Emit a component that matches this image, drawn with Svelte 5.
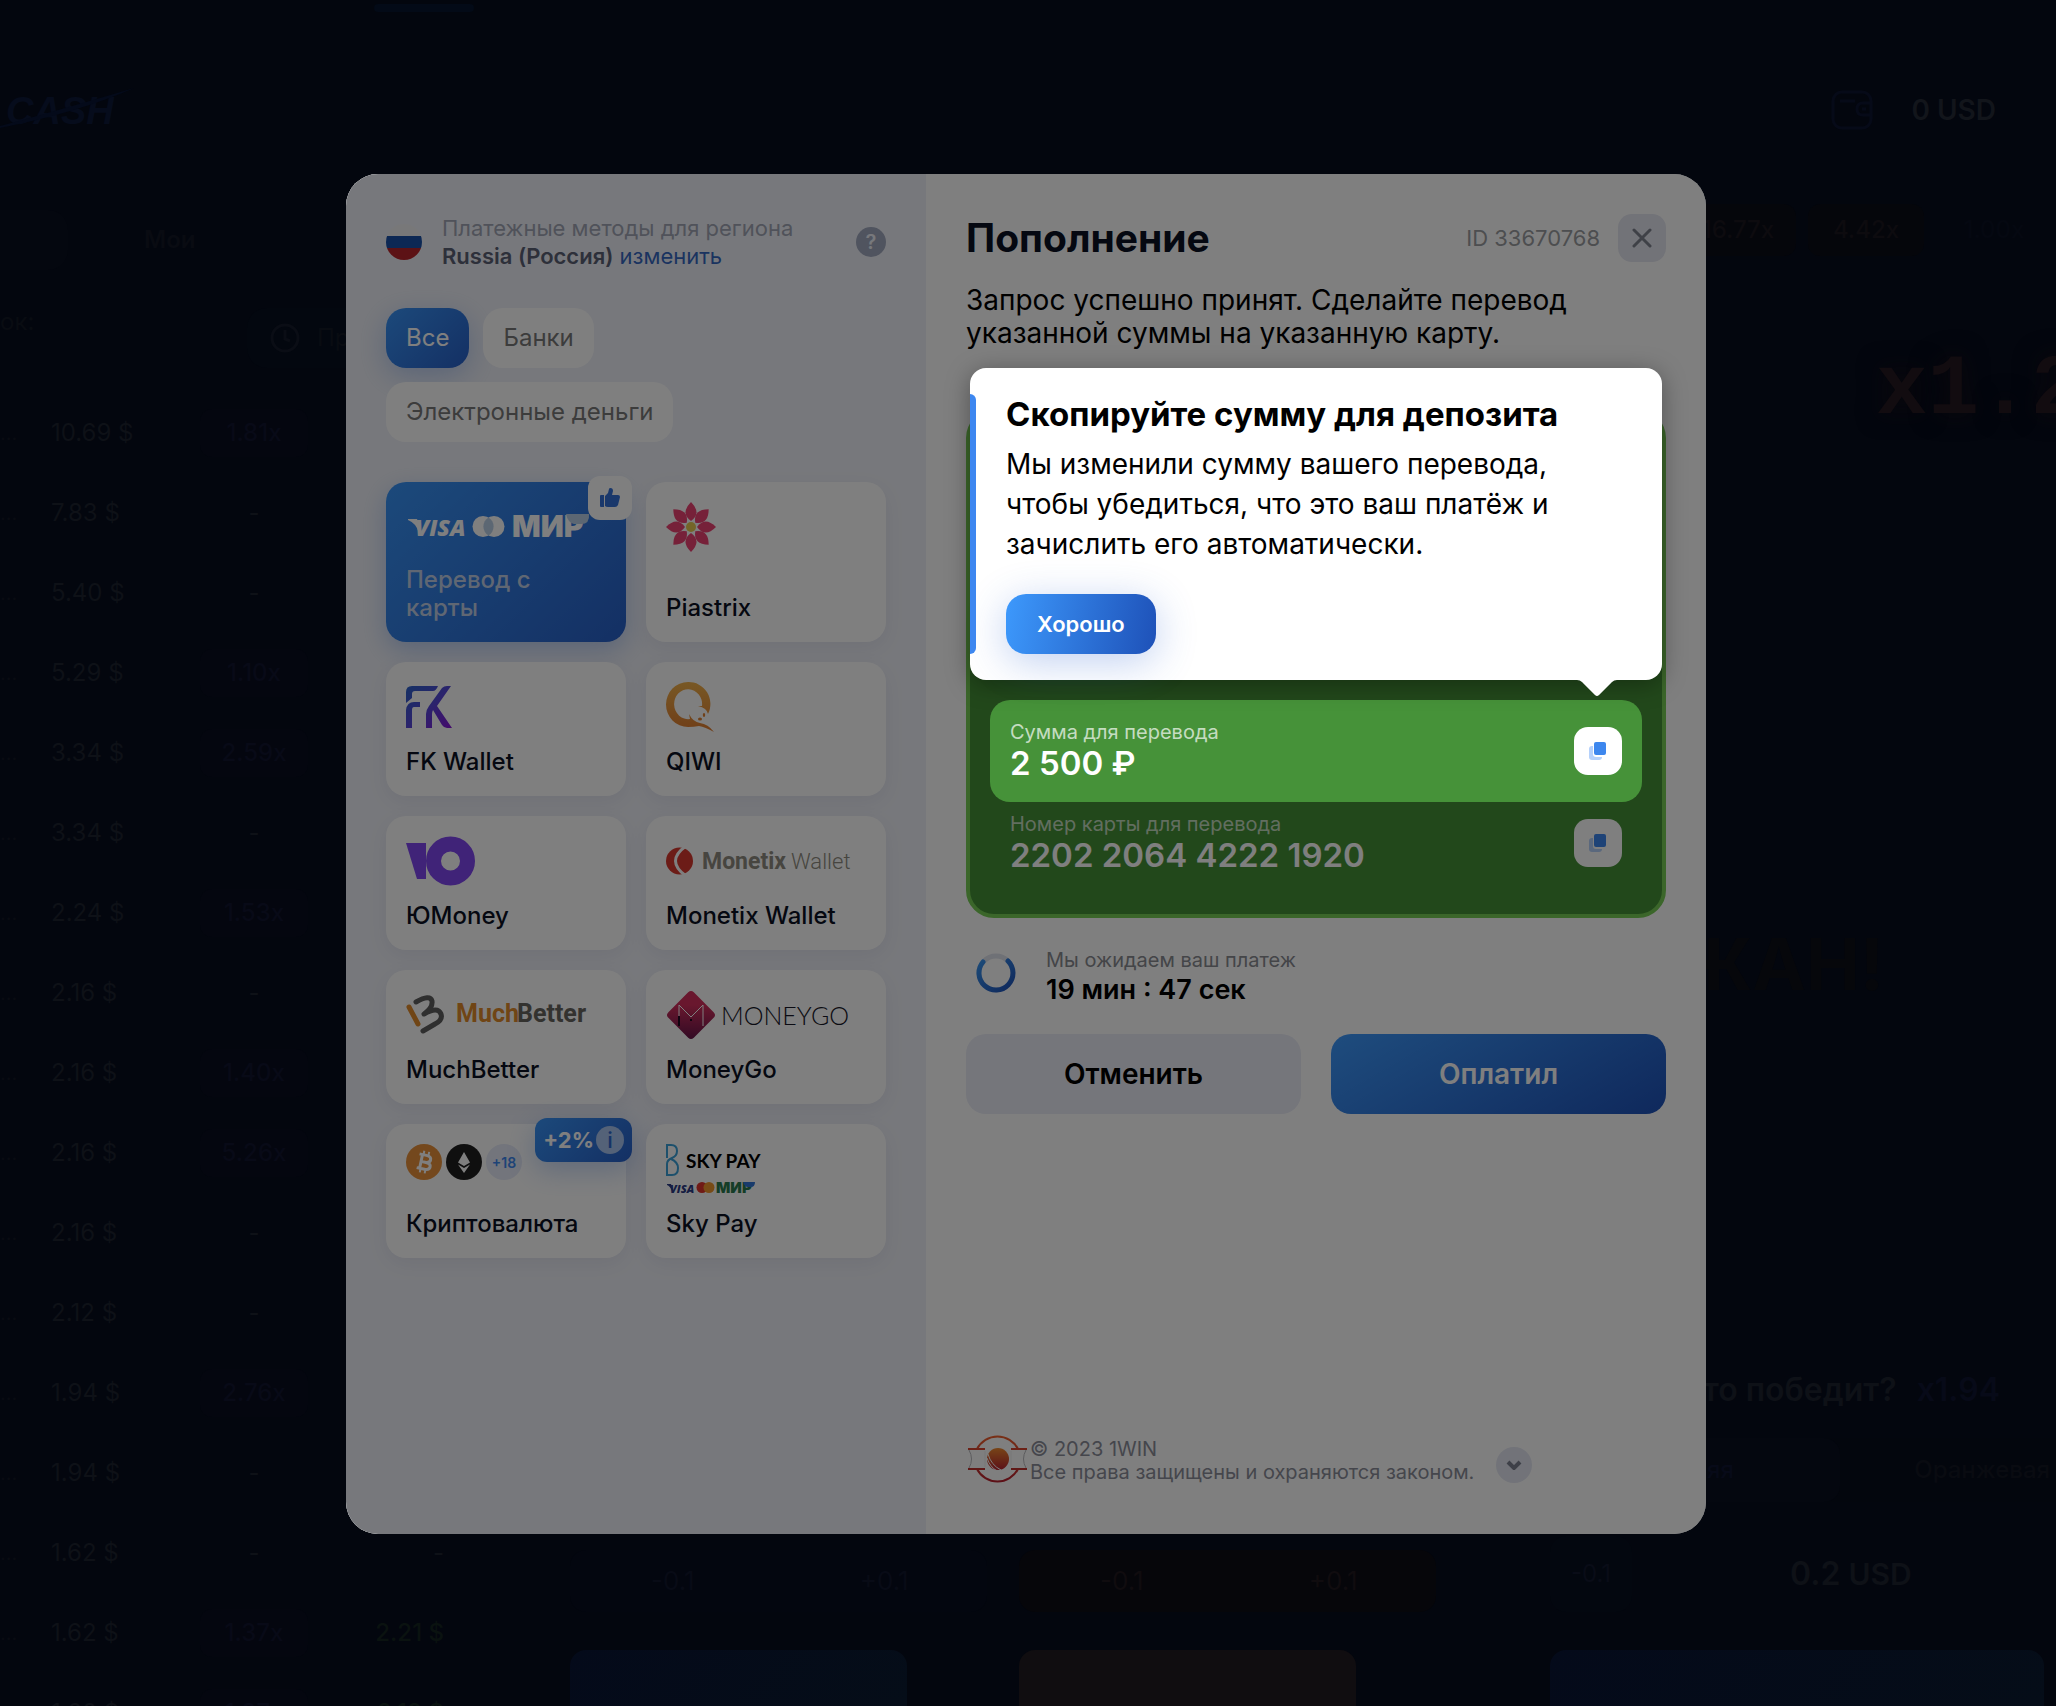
<script lang="ts">
  const bets = [
    { amount: '10.69 $', ratio: '1.81x' },
    { amount: '7.83 $' },
    { amount: '5.40 $' },
    { amount: '5.29 $', ratio: '1.10x' },
    { amount: '3.34 $', ratio: '2.59x' },
    { amount: '3.34 $' },
    { amount: '2.24 $', ratio: '1.53x' },
    { amount: '2.16 $' },
    { amount: '2.16 $', ratio: '1.40x' },
    { amount: '2.16 $', ratio: '5.26x' },
    { amount: '2.16 $' },
    { amount: '2.12 $' },
    { amount: '1.94 $', ratio: '2.76x' },
    { amount: '1.94 $' },
    { amount: '1.62 $', win: '-' },
    { amount: '1.62 $', ratio: '1.37x', win: '2.21 $' },
    { amount: '1.60 $', ratio: '1.37x', win: '2.19 $' },
  ]

  const filters = ['Все', 'Банки', 'Электронные деньги']
  let filter = $state('Все')

  const methods = [
    { id: 'card', label: 'Перевод с карты' },
    { id: 'piastrix', label: 'Piastrix' },
    { id: 'fk', label: 'FK Wallet' },
    { id: 'qiwi', label: 'QIWI' },
    { id: 'yoomoney', label: 'ЮMoney' },
    { id: 'monetix', label: 'Monetix Wallet' },
    { id: 'muchbetter', label: 'MuchBetter' },
    { id: 'moneygo', label: 'MoneyGo' },
    { id: 'crypto', label: 'Криптовалюта' },
    { id: 'skypay', label: 'Sky Pay' },
  ]
  let method = $state('card')
  let showHint = $state(true)

  const petals = [0, 45, 90, 135, 180, 225, 270, 315]
</script>

{#snippet copyIcon()}
  <svg width="18" height="18" viewBox="0 0 18 18" aria-hidden="true">
    <rect x="0" y="4" width="13" height="14" rx="3" fill="#b5d1fb" />
    <rect x="4" y="-1" width="15" height="16" rx="3" fill="#fff" />
    <rect x="5" y="0" width="12" height="13" rx="2" fill="#3d87ee" />
  </svg>
{/snippet}

{#snippet logo(id: string)}
  {#if id === 'card'}
    <svg width="184" height="50" viewBox="0 0 184 50">
      <path d="M2 17h9l5 13-3 1Q10 21 2 18z" fill="#fff" />
      <text class="visa" x="9" y="34" font-size="23" fill="#fff">VISA</text>
      <circle cx="77" cy="24.500" r="10.500" fill="#fff" />
      <circle cx="88" cy="24.500" r="10.500" fill="#fff" />
      <path d="M82.500 15.500a10.500 10.500 0 0 1 0 18a10.500 10.500 0 0 1 0-18z" fill="#b9cfe6" />
      <text class="mir" x="106" y="35" font-size="30" fill="#fff">МИР</text>
      <path d="M160 12h23q1 10-8 10h-7q-6-1-8-10z" fill="#b9cfe6" />
    </svg>
  {:else if id === 'piastrix'}
    <svg width="50" height="50" viewBox="0 0 50 50">
      {#each petals as angle}
        <path d="M25 19q-11-8 0-19q11 11 0 19z" fill="#ec4273" transform="rotate({angle} 25 25)" />
      {/each}
      <circle cx="25" cy="25" r="5" fill="#e8cb4e" />
    </svg>
  {:else if id === 'fk'}
    <svg width="46" height="50" viewBox="0 -4 46 50">
      <defs>
        <linearGradient id="fk" x1="0" y1="0" x2="1" y2="1">
          <stop offset="0" stop-color="#2a62c8" />
          <stop offset=".5" stop-color="#5547d8" />
          <stop offset="1" stop-color="#8a14d8" />
        </linearGradient>
      </defs>
      <path
        fill="url(#fk)"
        d="M0 17V6Q0 0 6 0H32Q30 5 27 5H9Q6 5 6 8V12ZM0 42V24Q1 16 8 16H14V21H8Q6 21 6 24V42ZM20 42V28Q20 24 23 20L36 2Q38 0 41 0H45L31 20L46 42H41Q38 42 36 39L27 24Q26 26 26 28V42Z"
      />
    </svg>
  {:else if id === 'qiwi'}
    <svg width="50" height="50" viewBox="0 0 50 50">
      <defs>
        <linearGradient id="qiwi" x1="0" y1="0" x2="0" y2="1">
          <stop offset="0" stop-color="#f0b04a" />
          <stop offset="1" stop-color="#e07c30" />
        </linearGradient>
      </defs>
      <path
        fill="url(#qiwi)"
        d="M22 0A22 22 0 0 1 42 32Q41 26 32 24H36A14 15 0 1 0 24 37L23 32Q27 40 34 41Q42 42 48 50Q39 45 33 44Q28 45 22 45A22 22.500 0 0 1 22 0Z"
      />
      <ellipse cx="34" cy="37" rx="2" ry="1.500" fill="#e08030" />
      <ellipse cx="38" cy="33" rx="1.200" ry="2" fill="#e08030" />
    </svg>
  {:else if id === 'yoomoney'}
    <svg width="70" height="50" viewBox="0 0 70 50">
      <path d="M0 7H20V43H11Z" fill="#8046f0" />
      <circle cx="44.500" cy="25" r="17" fill="none" stroke="#8046f0" stroke-width="15" />
    </svg>
  {:else if id === 'monetix'}
    <svg width="190" height="50" viewBox="0 0 190 50">
      <circle cx="13.500" cy="25" r="13.500" fill="#d8392f" />
      <path d="M20 10Q-1 25 20 40" fill="none" stroke="#fff" stroke-width="3" />
      <text x="36" y="33" font-family="Roboto" font-weight="700" font-size="23" fill="#8e8b80">Monetix</text>
      <text x="125" y="33" font-family="Roboto" font-weight="300" font-size="22" fill="#8e8b80">Wallet</text>
    </svg>
  {:else if id === 'muchbetter'}
    <svg width="190" height="50" viewBox="0 0 190 50">
      <g fill="none" stroke-width="5" stroke-linecap="round" stroke-linejoin="round">
        <path d="M3 17L12 34" stroke="#e08a2a" />
        <path d="M10 12Q24 4 26 11Q27 18 18 24Q32 16 35 24Q37 30 29 34L17 41" stroke="#5e5e5e" />
      </g>
      <text x="50" y="32" font-family="Roboto" font-weight="700" font-size="25" fill="#e08a2a">Much</text>
      <text x="111" y="32" font-family="Roboto" font-weight="700" font-size="25" fill="#66645f">Better</text>
    </svg>
  {:else if id === 'moneygo'}
    <svg width="190" height="50" viewBox="0 0 190 50">
      <defs>
        <linearGradient id="moneygo" x1="0" y1="0" x2="1" y2="1">
          <stop offset=".3" stop-color="#d22f5c" />
          <stop offset="1" stop-color="#611448" />
        </linearGradient>
      </defs>
      <rect x="7" y="7" width="36" height="36" rx="4" fill="url(#moneygo)" transform="rotate(45 25 25)" />
      <path d="M13 26V15L25 27L37 15V36" fill="none" stroke="#fff" stroke-width="1" />
      <path d="M13 26V36M24 30h2" fill="none" stroke="#200820" stroke-width="2" />
      <text x="55" y="35" font-family="Lato" font-weight="300" font-size="25" fill="#161627">MONEYGO</text>
    </svg>
  {:else if id === 'crypto'}
    <svg width="116" height="50" viewBox="0 0 116 50">
      <circle cx="18" cy="18" r="18" fill="#e8913a" />
      <g fill="none" stroke="#fff" stroke-width="3" transform="rotate(12 18 18)">
        <path d="M12 11H19Q24 11 24 14.500Q24 18 19 18H15H20Q25 18 25 21.500Q25 25 20 25H12M15 11V25" />
        <path d="M16 7V11M21 7V11M16 25V29M21 25V29" stroke-width="2" />
      </g>
      <circle cx="58" cy="18" r="18" fill="#1f1f1f" />
      <path d="M58 8L64 18.500L58 22L52 18.500ZM52 20.500L58 24L64 20.500L58 29Z" fill="#fff" />
      <circle cx="98" cy="18" r="18" fill="#e6eaf8" />
      <text x="98" y="24" text-anchor="middle" font-weight="600" font-size="14" fill="#3d87ee">+18</text>
    </svg>
  {:else if id === 'skypay'}
    <svg width="110" height="50" viewBox="0 0 110 50">
      <path d="M1 14V1H5Q11 1 11 7Q11 12 6 14Q1 16 1 20V31H6Q12 31 12 24Q12 18 5 15" fill="none" stroke="#3aa0d8" stroke-width="2" />
      <text x="20" y="24" font-family="Lato" font-weight="700" font-size="19" fill="#000">SKY PAY</text>
      <path d="M1 40h4l2 6-1 1Q4 42 1 41z" fill="#2b3a85" />
      <text class="visa" x="4" y="49" font-size="11" fill="#2b3a85">VISA</text>
      <circle cx="36" cy="43.500" r="5.500" fill="#e0352c" />
      <circle cx="43" cy="43.500" r="5.500" fill="#f0972c" />
      <text class="mir" x="50" y="49" font-size="15" fill="#2a7a4e">МИР</text>
      <path d="M77 38h12q0 5-4 5h-4q-3-1-4-5z" fill="#3277d8" />
    </svg>
  {/if}
{/snippet}

<div class="page">
  <div class="game">
    <section class="bets">
      <div class="brand">
        <div class="indicator"></div>
        <svg width="140" height="80" viewBox="0 0 140 80" aria-label="Cash">
          <text x="6" y="56" font-family="Liberation Sans" font-weight="700" font-style="italic" font-size="38" fill="#060c1c">CASH</text>
          <path d="M0 58Q60 42 134 20Q80 44 0 60Z" fill="#040a1a" />
        </svg>
      </div>
      <div class="tabs"><span class="tab current"></span><span class="tab">Мои</span></div>
      <div class="summary">
        <span>ок:</span>
        <span class="history">
          <svg width="32" height="32" viewBox="0 0 32 32" fill="none" stroke="#0a0d15" stroke-width="3">
            <circle cx="16" cy="16" r="13" /><path d="M16 8V17L21 19" />
          </svg>
          Пр
        </span>
      </div>
      <table>
        <tbody>
          {#each bets as bet}
            <tr>
              <td class="user">…</td>
              <td class="stake">{bet.amount}</td>
              <td class="ratio">{#if bet.ratio}<span>{bet.ratio}</span>{:else}-{/if}</td>
              <td class="win" class:won={bet.ratio}>{bet.win ?? ''}</td>
            </tr>
          {/each}
        </tbody>
      </table>
    </section>

    <section class="controls">
      {#each ['blue', 'orange'] as tone}
        <div class="control {tone}">
          <div class="steps"><span>-0.1</span><span>+0.1</span></div>
          <div class="place"></div>
        </div>
      {/each}
    </section>

    <section class="side">
      <div class="balance">
        <svg width="42" height="40" viewBox="0 0 42 40" fill="none" stroke="#060a18" stroke-width="3">
          <rect x="2" y="2" width="38" height="36" rx="9" /><path d="M9 11H24M40 13H32Q26 13 26 19Q26 25 32 25H40M31 19H35" />
        </svg>
        <span>0 USD</span>
      </div>
      <div class="rates"><span>16.77x</span><span>4.42x</span><span class="cold">1.00x</span></div>
      <div class="rocket">x1.2</div>
      <div class="cashed">ЖАН!</div>
      <div class="question">то победит? <span>x1.94</span></div>
      <div class="teams"><span class="picked">яя</span><span>Оранжевая</span></div>
      <div class="stake-box"><span class="step">-0.1</span><span class="sum">0.2 <small>USD</small></span></div>
      <div class="place"></div>
    </section>
  </div>

  <div class="overlay">
    <div class="modal" role="dialog" aria-label="Пополнение">
      <aside>
        <div class="region">
          <svg width="36" height="36" viewBox="0 0 36 36" aria-hidden="true">
            <clipPath id="flag"><circle cx="18" cy="18" r="18" /></clipPath>
            <g clip-path="url(#flag)">
              <rect width="36" height="12" fill="#f1f1f3" />
              <rect y="12" width="36" height="12" fill="#1a50a8" />
              <rect y="24" width="36" height="12" fill="#b8242a" />
            </g>
          </svg>
          <p>
            Платежные методы для региона<br />
            <b>Russia (Россия)</b> <a href="#region">изменить</a>
          </p>
          <button class="help" aria-label="Помощь">?</button>
        </div>

        <div class="filters">
          {#each filters as name}
            <button class:active={filter === name} onclick={() => (filter = name)}>{name}</button>
          {/each}
        </div>

        <div class="methods">
          {#each methods as item}
            <button class="method" class:active={method === item.id} onclick={() => (method = item.id)}>
              {@render logo(item.id)}
              <span class="label">{item.label}</span>
              {#if item.id === 'card'}
                <span class="badge like">
                  <svg width="20" height="20" viewBox="0 0 20 20" fill="#3571d6" aria-hidden="true">
                    <path d="M0 8Q0 7 1 7H4V19H1Q0 19 0 18ZM5 8L8 5L9 1Q9 0 10.500 0Q13 0 13 3L12 7H18Q20 7 20 9L18 17Q17 19 15 19H8Q6 19 5 18Z" />
                  </svg>
                </span>
              {:else if item.id === 'crypto'}
                <span class="badge bonus">+2% <i>i</i></span>
              {/if}
            </button>
          {/each}
        </div>
      </aside>

      <main>
        <header>
          <h1>Пополнение</h1>
          <span class="id">ID 33670768</span>
          <button class="close" aria-label="Закрыть">
            <svg width="20" height="20" viewBox="0 0 20 20" stroke="#7e828e" stroke-width="3" stroke-linecap="round">
              <path d="M2 2L18 18M18 2L2 18" />
            </svg>
          </button>
        </header>
        <p class="intro">Запрос успешно принят. Сделайте перевод указанной суммы на указанную карту.</p>

        <div class="transfer">
          <div class="row active">
            <div>
              <span class="caption">Сумма для перевода</span>
              <strong>2 500 ₽</strong>
            </div>
            <button class="copy" aria-label="Скопировать сумму">{@render copyIcon()}</button>

            {#if showHint}
              <div class="hint" role="tooltip">
                <h2>Скопируйте сумму для депозита</h2>
                <p>Мы изменили сумму вашего перевода, чтобы убедиться, что это ваш платёж и зачислить его автоматически.</p>
                <button onclick={() => (showHint = false)}>Хорошо</button>
                <svg class="arrow" width="40" height="16" viewBox="0 0 40 16" aria-hidden="true">
                  <path d="M0 0H40Q37 0 35 2L22 15Q20 17 18 15L5 2Q3 0 0 0Z" fill="#fff" />
                </svg>
              </div>
            {/if}
          </div>
          <div class="row">
            <div>
              <span class="caption">Номер карты для перевода</span>
              <strong>2202 2064 4222 1920</strong>
            </div>
            <button class="copy" aria-label="Скопировать номер карты">{@render copyIcon()}</button>
          </div>
        </div>

        <div class="timer">
          <svg width="40" height="40" viewBox="0 0 40 40" fill="none" stroke-width="5" stroke-linecap="round" aria-hidden="true">
            <defs>
              <linearGradient id="spin" x1="0" y1="0" x2="1" y2="1">
                <stop offset="0" stop-color="#3894f0" />
                <stop offset="1" stop-color="#1e51b8" />
              </linearGradient>
            </defs>
            <circle cx="20" cy="20" r="17" stroke="#dfe2ec" />
            <path d="M7 9A17 17 0 1 0 32 8" stroke="url(#spin)" />
          </svg>
          <div>
            <span>Мы ожидаем ваш платеж</span>
            <strong>19 мин : 47 сек</strong>
          </div>
        </div>

        <div class="actions">
          <button>Отменить</button>
          <button class="primary">Оплатил</button>
        </div>

        <footer>
          <svg width="62" height="48" viewBox="0 0 62 48" fill="none" aria-hidden="true">
            <defs>
              <linearGradient id="seal" x1="0" y1="0" x2="0" y2="1">
                <stop offset="0" stop-color="#f0602e" />
                <stop offset="1" stop-color="#b8202e" />
              </linearGradient>
              <linearGradient id="ball" x1="0" y1="0" x2="0" y2="1">
                <stop offset="0" stop-color="#f08a2e" />
                <stop offset="1" stop-color="#b8202e" />
              </linearGradient>
            </defs>
            <path d="M11 14A23 23 0 0 1 52 14M11 34A23 23 0 0 0 52 34" stroke="url(#seal)" stroke-width="2" />
            <path d="M2 14H19M45 14H61" stroke="#d8442e" stroke-width="2" />
            <path d="M2 34H19M45 34H61" stroke="#c0322e" stroke-width="2" />
            <path d="M3 15Q8 24 3 33M60 15Q55 24 60 33" stroke="#b9b9bd" stroke-width="1" />
            <path d="M19 16V32M45 16V32" stroke="#efefef" stroke-width="1" />
            <circle cx="32" cy="24" r="11" fill="url(#ball)" />
            <path d="M22 19Q25 30 35 35M21 23Q24 32 31 36" stroke="#fff" stroke-width="1" />
          </svg>
          <p>© 2023 1WIN<br />Все права защищены и охраняются законом.</p>
          <button aria-label="Подробнее">
            <svg width="16" height="10" viewBox="0 0 16 10" fill="none" stroke="#7d8190" stroke-width="4">
              <path d="M2 2L8 8L14 2" />
            </svg>
          </button>
        </footer>
      </main>
      <div class="dim"></div>
    </div>
  </div>
</div>

<style>
  :global(body) {
    margin: 0;
    background: #03060e;
  }

  .page {
    --blue: linear-gradient(135deg, #3893f6, #2860c8);
    position: relative;
    min-height: 100vh;
    font-family: Inter, 'Noto Sans', sans-serif;
    font-size: 24px;
    line-height: 28px;
  }

  button {
    padding: 0;
    border: 0;
    color: inherit;
    font: inherit;
    cursor: pointer;
  }

  h1,
  h2,
  p {
    margin: 0;
  }

  /* game screen behind the dialog */
  .game {
    position: absolute;
    inset: 0;
    display: grid;
    grid-template-columns: 474px 1fr 506px;
    overflow: hidden;
    color: #0e1117;
  }

  .bets {
    display: flex;
    flex-direction: column;
    overflow: hidden;
    white-space: nowrap;
  }

  .bets > div {
    flex: none;
  }

  .brand {
    box-sizing: border-box;
    height: 210px;
    padding-top: 4px;
  }

  .indicator {
    height: 8px;
    margin: 0 0 56px 374px;
    border-radius: 4px;
    background: #030a17;
  }

  .tabs {
    display: flex;
    gap: 76px;
    height: 60px;
    line-height: 60px;
    font-weight: 600;
    color: #090b12;
  }

  .tab.current {
    width: 68px;
    border-radius: 0 20px 20px 0;
    background: #04070f;
  }

  .summary {
    display: flex;
    justify-content: space-between;
    padding: 38px 0 25px;
    color: #090c12;
  }

  .history {
    display: flex;
    align-items: center;
    gap: 16px;
    height: 60px;
    width: 205px;
    padding-left: 22px;
    border-radius: 20px;
    background: #03070f;
  }

  table {
    width: 100%;
    border-collapse: collapse;
  }

  tr {
    height: 80px;
  }

  td {
    padding: 0;
  }

  .user {
    width: 51px;
    font-size: 20px;
    color: #090b12;
  }

  .ratio {
    width: 108px;
    text-align: center;
  }

  .ratio span {
    display: block;
    border-radius: 12px;
    background: #04060f;
    color: #080a17;
    font-weight: 500;
    line-height: 48px;
  }

  .win {
    width: 166px;
    padding-right: 30px;
    text-align: right;
    box-sizing: border-box;
  }

  .won {
    color: #0a1210;
    font-weight: 500;
  }

  .controls {
    display: flex;
    align-items: flex-end;
    justify-content: space-between;
    padding: 0 114px 0 96px;
  }

  .control {
    width: 417px;
    color: #080b16;
  }

  .control.orange {
    color: #100c0f;
  }

  .steps {
    display: grid;
    grid-template-columns: 1fr 1fr;
    gap: 6px;
    margin-bottom: 38px;
    border-radius: 16px;
    background: #03060f;
    font-size: 26px;
    line-height: 62px;
    text-align: center;
  }

  .orange .steps {
    background: #06060a;
  }

  .place {
    height: 56px;
    border-radius: 16px 16px 0 0;
    background: linear-gradient(135deg, #040a1a, #050d18);
  }

  .control .place {
    width: 337px;
  }

  .orange .place {
    background: #100d10;
  }

  .side {
    display: flex;
    flex-direction: column;
    font-weight: 600;
  }

  .balance {
    display: flex;
    align-items: center;
    justify-content: flex-end;
    gap: 38px;
    padding: 90px 60px 74px 0;
    font-size: 28px;
    color: #12151b;
  }

  .rates {
    display: flex;
    gap: 12px;
    padding-left: 130px;
    color: #0d0b0f;
    font-weight: 500;
  }

  .rates span {
    width: 116px;
    border-radius: 12px;
    background: #05060b;
    line-height: 52px;
    text-align: center;
  }

  .rates .cold {
    background: none;
    color: #050811;
  }

  .rocket {
    padding: 94px 0 0 326px;
    font: 700 86px / 80px 'Liberation Mono', monospace;
    color: #120c10;
    text-shadow: 0 0 24px #0c080c;
  }

  .cashed {
    padding: 474px 172px 0 0;
    text-align: right;
    font-size: 72px;
    font-weight: 700;
    line-height: 120px;
    color: #06070b;
  }

  .question {
    margin-top: auto;
    padding: 0 56px 28px 0;
    text-align: right;
    font-size: 32px;
    line-height: 40px;
  }

  .question span {
    margin-left: 12px;
    color: #070a18;
  }

  .teams {
    display: flex;
    justify-content: space-between;
    margin-left: 50px;
    padding-right: 6px;
    background: #03060d;
    font-weight: 500;
    line-height: 64px;
    color: #090b11;
  }

  .teams .picked {
    width: 240px;
    padding-right: 106px;
    box-sizing: border-box;
    text-align: right;
    border-radius: 16px;
    background: #04070f;
    color: #070a18;
  }

  .stake-box {
    display: flex;
    align-items: center;
    gap: 158px;
    padding: 34px 0 38px;
  }

  .stake-box .step {
    width: 82px;
    border-radius: 16px;
    background: #03070f;
    font-weight: 400;
    line-height: 76px;
    text-align: center;
    color: #090c17;
  }

  .sum {
    font-size: 32px;
  }

  .sum small {
    font-size: 30px;
  }

  .side .place {
    flex: none;
    margin-right: 12px;
  }

  /* dialog */
  .overlay {
    position: relative;
    display: flex;
    justify-content: center;
    min-height: 100vh;
    box-sizing: border-box;
    padding: 174px 4px 172px 0;
  }

  .modal {
    position: relative;
    display: grid;
    grid-template-columns: 580px 1fr;
    width: 100%;
    max-width: 1360px;
    border-radius: 32px;
    overflow: hidden;
    background: #fff;
    color: #0b1023;
  }

  /* everything but the highlighted row is shaded */
  .dim {
    position: absolute;
    inset: 0;
    z-index: 1;
    background: rgba(0, 0, 0, 0.5);
    pointer-events: none;
  }

  aside {
    padding: 40px;
    background: #eff1f8;
  }

  .region {
    display: flex;
    align-items: center;
    gap: 20px;
    margin-bottom: 38px;
    font-size: 22px;
    color: #a0a5b4;
  }

  .region b {
    font-weight: 600;
    color: #5b6075;
  }

  .region a {
    color: #3567c0;
    text-decoration: none;
  }

  .help {
    width: 30px;
    height: 30px;
    margin-left: auto;
    border-radius: 50%;
    background: #a0a8be;
    color: #eff1f8;
    font-size: 20px;
    font-weight: 600;
  }

  .filters {
    display: flex;
    flex-wrap: wrap;
    gap: 14px;
    margin-bottom: 40px;
  }

  .filters button {
    height: 60px;
    padding: 0 20px;
    border-radius: 20px;
    background: #fff;
    color: #787878;
  }

  .filters .active {
    background: var(--blue);
    color: #fff;
    box-shadow: 0 8px 28px rgba(45, 110, 220, 0.3);
  }

  .methods {
    display: grid;
    grid-template-columns: 1fr 1fr;
    gap: 20px;
  }

  .method {
    position: relative;
    display: flex;
    flex-direction: column;
    justify-content: space-between;
    align-items: flex-start;
    min-height: 134px;
    padding: 20px;
    border-radius: 20px;
    background: #fff;
    box-shadow: 0 6px 20px rgba(60, 70, 120, 0.08);
    text-align: left;
    font-weight: 500;
  }

  .method:nth-child(-n + 2) {
    min-height: 160px;
  }

  .method.active {
    background: var(--blue);
    color: #c0cfe6;
    box-shadow: 0 8px 24px rgba(45, 110, 220, 0.3);
  }

  .method.active .label {
    max-width: 160px;
  }

  .visa {
    font-family: 'Open Sans', sans-serif;
    font-weight: 800;
    font-style: italic;
  }

  .mir {
    font-family: Inter, sans-serif;
    font-weight: 900;
  }

  .badge {
    position: absolute;
    top: -6px;
    right: -6px;
    display: flex;
    align-items: center;
    justify-content: center;
    height: 44px;
    border-radius: 12px;
  }

  .like {
    width: 44px;
    background: #fff;
  }

  .bonus {
    gap: 2px;
    padding: 0 8px;
    background: var(--blue);
    box-shadow: 0 8px 28px rgba(45, 110, 220, 0.3);
    color: #fff;
    font-size: 22px;
    font-weight: 700;
  }

  .bonus i {
    width: 28px;
    border-radius: 50%;
    background: #a9c4f0;
    color: #2c66cc;
    font-style: normal;
    font-weight: 500;
    text-align: center;
  }

  main {
    display: flex;
    flex-direction: column;
    padding: 40px 40px 50px;
  }

  header {
    display: flex;
    align-items: center;
    gap: 18px;
    margin-bottom: 22px;
  }

  h1 {
    flex: 1;
    font-size: 39px;
    line-height: 48px;
  }

  .id {
    color: #9a9ca0;
    font-size: 22px;
  }

  .close {
    display: grid;
    place-items: center;
    width: 48px;
    height: 48px;
    border-radius: 14px;
    background: #e4e6f0;
  }

  .intro {
    margin-bottom: 60px;
    color: #000;
    font-size: 28px;
    line-height: 33px;
  }

  .transfer {
    display: flex;
    flex-direction: column;
    justify-content: flex-end;
    box-sizing: border-box;
    min-height: 508px;
    padding: 20px;
    border: 4px solid #76cc55;
    border-radius: 28px;
    background: #459036;
  }

  .row {
    display: flex;
    align-items: center;
    justify-content: space-between;
    box-sizing: border-box;
    min-height: 102px;
    padding: 0 20px;
    border-radius: 20px;
    color: #fff;
  }

  .row + .row {
    margin-top: -10px;
  }

  .row.active {
    position: relative;
    z-index: 2;
    background: #469239;
  }

  .caption {
    display: block;
    font-size: 20px;
    line-height: 24px;
    color: rgba(255, 255, 255, 0.7);
  }

  .row strong {
    display: block;
    font-size: 33px;
    font-weight: 600;
    line-height: 38px;
  }

  .copy {
    display: grid;
    place-items: center;
    width: 48px;
    height: 48px;
    border-radius: 14px;
    background: #fff;
  }

  .hint {
    position: absolute;
    right: -20px;
    bottom: calc(100% + 20px);
    left: -20px;
    padding: 26px 36px;
    border-radius: 16px;
    background: #fff;
    box-shadow: 0 4px 24px rgba(0, 0, 0, 0.35);
    color: #000;
  }

  .hint::before {
    content: '';
    position: absolute;
    top: 26px;
    bottom: 26px;
    left: 0;
    width: 6px;
    border-radius: 0 6px 6px 0;
    background: #3d87f0;
  }

  .hint h2 {
    margin-bottom: 10px;
    font-size: 33px;
    line-height: 40px;
  }

  .hint p {
    max-width: 570px;
    margin-bottom: 30px;
    font-size: 28px;
    line-height: 40px;
  }

  .hint button {
    height: 60px;
    padding: 0 31px;
    border-radius: 20px;
    background: linear-gradient(100deg, #3d99fc, #1e51b8);
    box-shadow: 0 8px 40px rgba(45, 100, 210, 0.3);
    color: #fff;
    font-size: 22px;
    font-weight: 600;
  }

  .arrow {
    position: absolute;
    top: 100%;
    right: 45px;
  }

  .timer {
    display: flex;
    align-items: center;
    gap: 30px;
    margin: 28px 0;
    padding-left: 10px;
  }

  .timer svg {
    margin-bottom: 6px;
  }

  .timer span {
    display: block;
    color: #888a90;
    font-size: 20px;
  }

  .timer strong {
    display: block;
    color: #000;
    font-size: 27px;
    font-weight: 600;
    line-height: 32px;
  }

  .actions {
    display: grid;
    grid-template-columns: 1fr 1fr;
    gap: 30px;
  }

  .actions button {
    height: 80px;
    border-radius: 20px;
    background: #eaecf6;
    color: #000;
    font-size: 28px;
    font-weight: 600;
  }

  .actions .primary {
    background: linear-gradient(150deg, #3d99fc, #1e51b8);
    color: #fff;
  }

  footer {
    display: flex;
    align-items: center;
    gap: 2px;
    margin-top: auto;
    color: #8a8d99;
    font-size: 20px;
    line-height: 23px;
  }

  footer p {
    margin-top: 4px;
  }

  footer button {
    display: grid;
    place-items: center;
    width: 36px;
    height: 36px;
    margin: 12px 0 0 20px;
    border-radius: 50%;
    background: #e4e7f2;
  }
</style>
